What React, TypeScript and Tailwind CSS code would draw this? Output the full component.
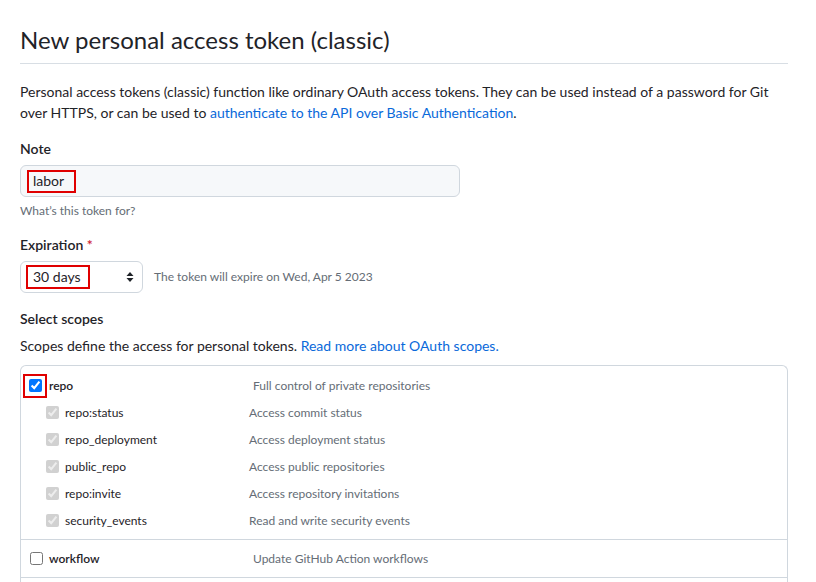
import type { ReactNode } from "react";

const font = { fontFamily: '"Segoe UI", Lato, "Noto Sans", sans-serif' };

function RedBox({ children, className = "" }: { children: ReactNode; className?: string }) {
    return <span className={`border-2 border-[#e00000] ${className}`}>{children}</span>;
}

interface Scope {
    name: string;
    description: string;
}

const repoScopes: Scope[] = [
    { name: "repo:status", description: "Access commit status" },
    { name: "repo_deployment", description: "Access deployment status" },
    { name: "public_repo", description: "Access public repositories" },
    { name: "repo:invite", description: "Access repository invitations" },
    { name: "security_events", description: "Read and write security events" },
];

function SelectArrows() {
    return (
        <svg width="8" height="12" viewBox="0 0 8 12" className="text-[#1f2328]">
            <path d="M4 1 L7.5 5 H0.5 Z" fill="currentColor" />
            <path d="M4 11 L7.5 7 H0.5 Z" fill="currentColor" />
        </svg>
    );
}

export default function App() {
    return (
        <div className="min-h-screen bg-white text-[#1f2328]" style={font}>
            <div className="w-[788px] pl-5 pt-[25px]">
                {/* Header */}
                <div className="border-b border-[#d8dee4] pb-[8px]">
                    <h2 className="text-2xl font-normal leading-[30px]">New personal access token (classic)</h2>
                </div>

                <p className="mt-[17px] text-sm leading-[21px]">
                    Personal access tokens (classic) function like ordinary OAuth access tokens. They can be used instead of a password for Git over HTTPS, or can be used to{" "}
                    <a className="text-[#0969da]">authenticate to the API over Basic Authentication</a>.
                </p>

                {/* Note */}
                <div className="mt-[15px]">
                    <label className="block text-sm font-semibold leading-[21px]">Note</label>
                    <div className="mt-[6px] flex h-8 w-[440px] items-center rounded-md border border-[#d0d7de] bg-[#f6f8fa] px-[6px]">
                        <RedBox className="flex h-[23px] w-[49px] items-center px-[4px] text-sm">labor</RedBox>
                    </div>
                    <p className="mt-[5px] text-xs leading-[18px] text-[#656d76]">What’s this token for?</p>
                </div>

                {/* Expiration */}
                <div className="mt-[14px]">
                    <label className="block text-sm font-semibold leading-[21px]">
                        Expiration <span className="text-[#cf222e]">*</span>
                    </label>
                    <div className="mt-[6px] flex items-center gap-[11px]">
                        <div className="flex h-8 w-[123px] items-center justify-between rounded-md border border-[#d0d7de] bg-white pl-[5px] pr-[8px]">
                            <RedBox className="flex h-[24px] w-[64px] items-center px-[5px] text-sm">30 days</RedBox>
                            <SelectArrows />
                        </div>
                        <span className="text-xs text-[#656d76]">The token will expire on Wed, Apr 5 2023</span>
                    </div>
                </div>

                {/* Scopes */}
                <div className="mt-[15px]">
                    <h3 className="text-sm font-semibold leading-[21px]">Select scopes</h3>
                    <p className="mt-[6px] text-sm leading-[21px]">
                        Scopes define the access for personal tokens.{" "}
                        <a className="text-[#0969da]">Read more about OAuth scopes.</a>
                    </p>

                    <div className="mt-[9px] rounded-t-md border-x border-t border-[#d0d7de]">
                        {/* repo group */}
                        <div className="border-b border-[#d0d7de] pt-[6px] pb-[5px]">
                            <div className="flex h-[27px] items-center">
                                <div className="flex w-[232px] items-center pl-[2px]">
                                    <RedBox className="flex h-[24px] w-[24px] items-center justify-center">
                                        <input type="checkbox" checked readOnly className="m-0 h-[13px] w-[13px]" />
                                    </RedBox>
                                    <span className="ml-[2px] text-xs font-semibold">repo</span>
                                </div>
                                <span className="text-xs text-[#656d76]">Full control of private repositories</span>
                            </div>
                            {repoScopes.map((scope) => (
                                <div key={scope.name} className="flex h-[27px] items-center">
                                    <div className="flex w-[228px] items-center pl-[25px]">
                                        <input type="checkbox" checked disabled readOnly className="m-0 h-[13px] w-[13px]" />
                                        <span className="ml-[6px] text-xs">{scope.name}</span>
                                    </div>
                                    <span className="text-xs text-[#656d76]">{scope.description}</span>
                                </div>
                            ))}
                        </div>

                        {/* workflow group */}
                        <div className="border-b border-[#d0d7de] py-[5px]">
                            <div className="flex h-[27px] items-center">
                                <div className="flex w-[232px] items-center pl-[9px]">
                                    <input type="checkbox" readOnly className="m-0 h-[13px] w-[13px]" />
                                    <span className="ml-[6px] text-xs font-semibold">workflow</span>
                                </div>
                                <span className="text-xs text-[#656d76]">Update GitHub Action workflows</span>
                            </div>
                        </div>
                        <div className="h-2" />
                    </div>
                </div>
            </div>
        </div>
    );
}
